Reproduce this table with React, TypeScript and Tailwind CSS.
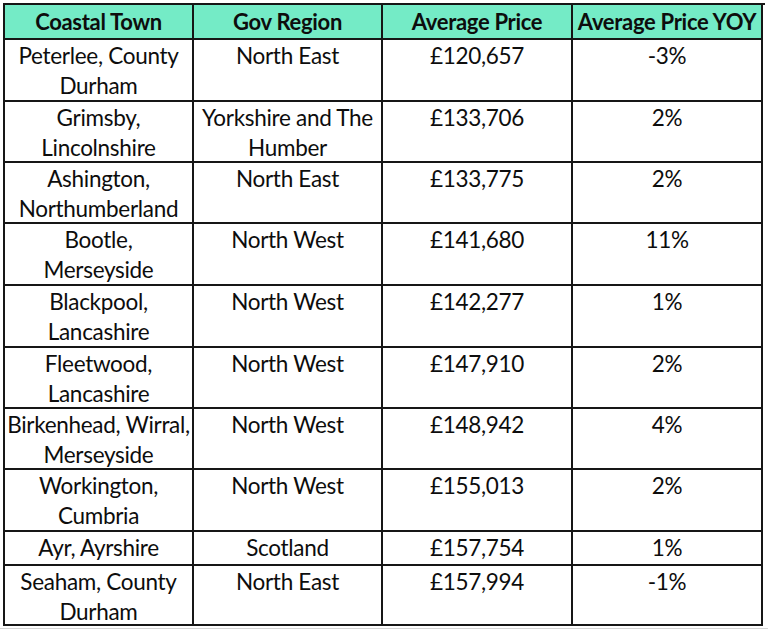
import { Fragment } from 'react'

type Row = {
  town: string[]
  region: string[]
  price: string
  yoy: string
}

const rows: Row[] = [
  { town: ['Peterlee, County', 'Durham'], region: ['North East'], price: '£120,657', yoy: '-3%' },
  { town: ['Grimsby,', 'Lincolnshire'], region: ['Yorkshire and The', 'Humber'], price: '£133,706', yoy: '2%' },
  { town: ['Ashington,', 'Northumberland'], region: ['North East'], price: '£133,775', yoy: '2%' },
  { town: ['Bootle,', 'Merseyside'], region: ['North West'], price: '£141,680', yoy: '11%' },
  { town: ['Blackpool,', 'Lancashire'], region: ['North West'], price: '£142,277', yoy: '1%' },
  { town: ['Fleetwood,', 'Lancashire'], region: ['North West'], price: '£147,910', yoy: '2%' },
  { town: ['Birkenhead, Wirral,', 'Merseyside'], region: ['North West'], price: '£148,942', yoy: '4%' },
  { town: ['Workington,', 'Cumbria'], region: ['North West'], price: '£155,013', yoy: '2%' },
  { town: ['Ayr, Ayrshire'], region: ['Scotland'], price: '£157,754', yoy: '1%' },
  { town: ['Seaham, County', 'Durham'], region: ['North East'], price: '£157,994', yoy: '-1%' },
]

const headers = ['Coastal Town', 'Gov Region', 'Average Price', 'Average Price YOY']

// shared body cell style
const cell =
  'border-r-2 border-b-2 border-[#161616] text-center text-[22.5px] leading-[29.5px] pt-[1px] tracking-[-0.3px] whitespace-nowrap'

function Lines({ lines }: { lines: string[] }) {
  return (
    <>
      {lines.map((line, i) => (
        <div key={i}>{line}</div>
      ))}
    </>
  )
}

export default function App() {
  return (
    <div className="w-[768px] h-[632px] bg-white overflow-hidden font-['Lato',sans-serif] text-[#0d0d0d]">
      <div className="ml-[3px] mt-[3px] w-[762px] grid grid-cols-[189px_189px_190px_190px] grid-rows-[35px_62px_61px_61px_62px_62px_61px_61px_62px_34px_60px] border-l-2 border-t-2 border-[#161616]">
        {headers.map((h) => (
          <div
            key={h}
            className="bg-[#74ebc6] border-r-2 border-b-2 border-[#161616] flex items-center justify-center text-[22px] font-bold tracking-[-0.3px] whitespace-nowrap"
          >
            {h}
          </div>
        ))}
        {rows.map((r) => (
          <Fragment key={r.price}>
            <div className={cell}>
              <Lines lines={r.town} />
            </div>
            <div className={cell}>
              <Lines lines={r.region} />
            </div>
            <div className={cell}>{r.price}</div>
            <div className={cell}>{r.yoy}</div>
          </Fragment>
        ))}
      </div>
      <div className="mt-[2px] h-px w-full bg-[#d4d4d4]" />
    </div>
  )
}
